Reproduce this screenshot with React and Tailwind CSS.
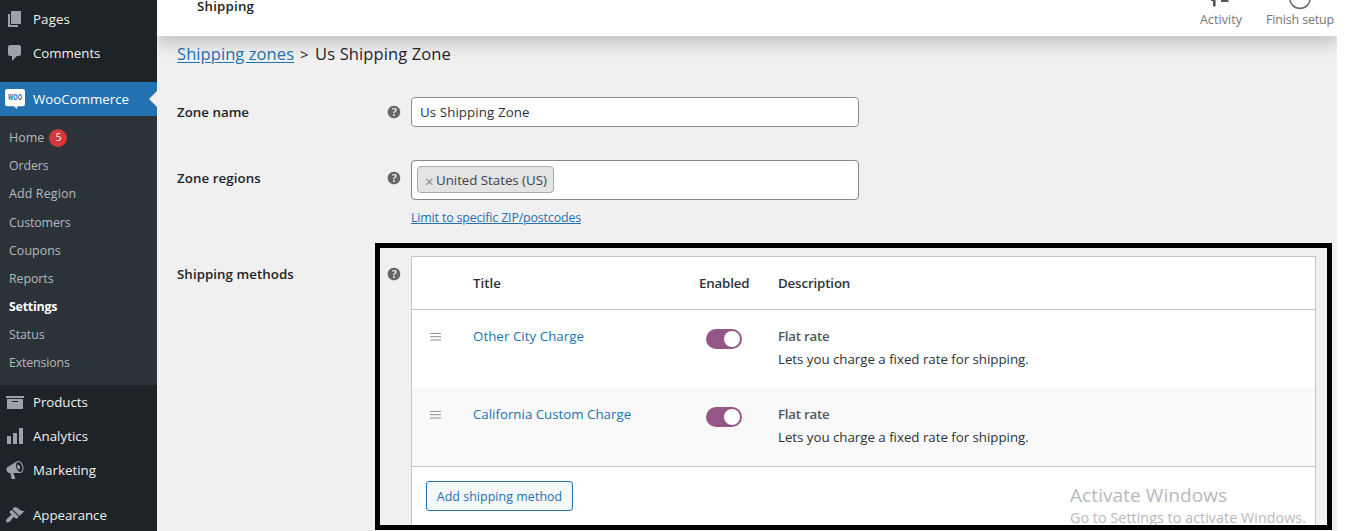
const ICONS = {
  page: "M6 15V2h10v13H6zm-1 1h8v2H3V5h2v11z",
  comments: "M5 2h9c1.1 0 2 .9 2 2v7c0 1.1-.9 2-2 2h-2l-5 5v-5H5c-1.1 0-2-.9-2-2V4c0-1.1.9-2 2-2z",
  archive: "M19 4v2H1V4h18zM2 7h16v10H2V7zm11 3V9H7v1h6z",
  chart: "M18 18V2h-4v16h4zm-6 0V7H8v11h4zm-6 0v-8H2v8h4z",
  megaphone:
    "M18.15 5.94c.46 1.62.38 3.22-.02 4.48-.42 1.28-1.26 2.18-2.3 2.48-.16.06-.26.06-.4.06-.06.02-.12.02-.18.02-.06.02-.14.02-.22.02h-6.8l2.22 5.5c.02.14-.06.26-.14.34-.08.1-.24.16-.34.16H6.95c-.1 0-.26-.06-.34-.16-.08-.08-.16-.2-.14-.34l-1-5.5H4.25l-.02-.02c-.5.06-1.08-.18-1.54-.62s-.88-1.08-1.06-1.88c-.24-.8-.2-1.56-.02-2.2.18-.62.58-1.08 1.06-1.3l.02-.02 9-5.4c.1-.06.18-.1.24-.16.06-.04.14-.08.24-.12.16-.08.28-.12.5-.18 1.04-.3 2.24.1 3.22.98s1.84 2.24 2.26 3.86zm-2.58 5.98h-.02c.4-.1.74-.34 1.04-.7.58-.7.86-1.76.86-3.04 0-.64-.1-1.3-.28-1.98-.34-1.36-1.02-2.5-1.78-3.24s-1.68-1.1-2.46-.88c-.82.22-1.4.96-1.7 2-.32 1.04-.28 2.36.06 3.72.38 1.36 1 2.5 1.8 3.24.78.74 1.62 1.1 2.48.88zm-2.54-7.08c.22-.04.42-.02.62.04.38.16.76.48 1.02 1s.42 1.2.42 1.78c0 .3-.04.56-.12.8-.18.48-.44.84-.86.94-.34.1-.8-.06-1.14-.4s-.64-.86-.78-1.5c-.18-.62-.12-1.24.02-1.72s.48-.84.82-.94z",
  appearance:
    "M14.48 11.06L7.41 3.99l1.5-1.5c.5-.56 2.3-.47 3.51.32 1.21.8 1.43 1.28 2.91 2.1 1.18.64 2.45 1.26 4.45.85zm-.71.71L6.7 4.7 4.93 6.47c-.39.39-.39 1.02 0 1.41l1.06 1.06c.39.39.39 1.03 0 1.42-.6.6-1.43 1.11-2.21 1.69-.35.26-.7.53-1.01.84C1.43 14.23.4 16.08 1.4 17.07c.99 1 2.84-.03 4.18-1.36.31-.31.58-.66.85-1.02.57-.78 1.08-1.61 1.69-2.21.39-.39 1.02-.39 1.41 0l1.06 1.06c.39.39 1.02.39 1.41 0z",
  help: "M17 10c0-3.87-3.14-7-7-7-3.87 0-7 3.13-7 7s3.13 7 7 7c3.86 0 7-3.13 7-7zm-6.3 1.48H9.14v-.43c0-.38.08-.7.24-.98s.46-.57.88-.89c.41-.29.68-.53.81-.71.14-.18.2-.39.2-.62 0-.25-.09-.44-.28-.58-.19-.13-.45-.19-.79-.19-.58 0-1.25.15-2 .46l-.64-1.28c.87-.49 1.8-.74 2.77-.74.81 0 1.45.2 1.92.58.48.39.71.91.71 1.55 0 .43-.09.8-.29 1.11-.19.32-.57.67-1.11 1.06-.38.28-.61.49-.71.63-.1.15-.15.34-.15.57v.35zm-1.47 2.74c-.18-.17-.27-.42-.27-.73 0-.33.08-.58.26-.75s.43-.25.77-.25c.32 0 .57.09.75.26s.27.42.27.74c0 .3-.09.55-.27.72-.18.18-.43.27-.75.27-.33 0-.58-.09-.76-.26z",
};

function Icon({ name, className }) {
  return (
    <svg viewBox="0 0 20 20" fill="currentColor" className={className}>
      <path d={ICONS[name]} />
    </svg>
  );
}

function WooIcon() {
  return (
    <svg viewBox="0 0 20 20" className="size-5 shrink-0 overflow-visible">
      <path d="M2.2 0h15.6Q20 0 20 2.2v12.8q0 2.2-2.2 2.2H12.4L12 20L9 17.2H2.2Q0 17.2 0 15V2.2Q0 0 2.2 0z" fill="#fff" />
      <text x="10" y="11.3" textAnchor="middle" textLength="14" lengthAdjust="spacingAndGlyphs" fontSize="8" fontWeight="700" fill="#2271b1" fontFamily="Open Sans, sans-serif">
        WOO
      </text>
    </svg>
  );
}

function MenuItem({ icon, label, tracking }) {
  return (
    <a className="flex h-[34px] shrink-0 items-center gap-2 pl-[5px] text-[13.3px] text-[#f0f0f1]">
      <Icon name={icon} className="size-5 shrink-0 text-[#9ca2a7]" />
      <span className={`pt-0.5 ${tracking}`}>{label}</span>
    </a>
  );
}

const SUBMENU = [
  { label: "Home", cls: "tracking-[0.1px]", badge: "5" },
  { label: "Orders", cls: "tracking-[-0.1px]" },
  { label: "Add Region", cls: "tracking-[0.16px]" },
  { label: "Customers", cls: "tracking-[-0.12px]" },
  { label: "Coupons", cls: "tracking-[0.06px]" },
  { label: "Reports", cls: "tracking-[-0.08px]" },
  { label: "Settings", cls: "font-bold text-white tracking-[-0.22px]" },
  { label: "Status", cls: "tracking-[-0.08px]" },
  { label: "Extensions", cls: "tracking-[-0.16px]" },
];

function Sidebar() {
  return (
    <nav className="flex h-full w-[157px] shrink-0 flex-col overflow-hidden bg-[#1d2327] pt-0.5">
      <MenuItem icon="page" label="Pages" tracking="tracking-[0.12px]" />
      <MenuItem icon="comments" label="Comments" tracking="tracking-[-0.04px]" />
      <a className="relative mt-3 flex h-[34px] shrink-0 items-center gap-2 bg-[#2271b1] pl-[5px] text-[13.3px] text-white">
        <WooIcon />
        <span className="pt-0.5">WooCommerce</span>
        <svg viewBox="0 0 8 16" className="absolute top-[9px] right-0 h-4 w-2">
          <path d="M8 0v16L0 8z" fill="#f0f0f1" />
        </svg>
      </a>
      <div className="flex h-[269px] shrink-0 flex-col bg-[#2c3338] pt-[7.4px]">
        {SUBMENU.map((s) => (
          <a key={s.label} className="flex h-[28.13px] shrink-0 items-center gap-[5px] pl-[9px] text-[12.4px] text-[#b5b9bc]">
            <span className={`pt-0.5 ${s.cls}`}>{s.label}</span>
            {s.badge && (
              <span className="mt-px flex size-[18px] items-center justify-center rounded-full bg-[#d63638] text-[10.5px] text-white">
                {s.badge}
              </span>
            )}
          </a>
        ))}
      </div>
      <MenuItem icon="archive" label="Products" tracking="tracking-[-0.05px]" />
      <MenuItem icon="chart" label="Analytics" tracking="tracking-[0.04px]" />
      <MenuItem icon="megaphone" label="Marketing" tracking="tracking-[0.04px]" />
      <div className="h-[11px] shrink-0" />
      <MenuItem icon="appearance" label="Appearance" tracking="tracking-[-0.05px]" />
    </nav>
  );
}

function Header() {
  return (
    <header className="relative z-10 flex h-9 w-[1180px] shrink-0 justify-between bg-white pl-10 shadow-[0_8px_16px_0_rgba(85,93,102,0.3)]">
      <h1 className="text-[13.3px] leading-[13px] font-semibold tracking-[0.2px] text-[#1e1e1e]">Shipping</h1>
      <div className="flex gap-6 pr-[3px] text-[12.4px] text-[#757575]">
        <div className="flex flex-col">
          <svg viewBox="0 0 42 12" className="h-3 w-[42px]" fill="#50575e">
            <path d="M13 0h2.6v6.6H13zM11 0h2v.9h-2zM21 0h7.5v2H21z" />
          </svg>
          <span className="leading-4 tracking-[0.1px]">Activity</span>
        </div>
        <div className="flex flex-col">
          <svg viewBox="0 0 67 12" className="h-3 w-[67px]" fill="none">
            <circle cx="34" cy="-1.8" r="10.2" stroke="#6c6f72" strokeWidth="1.6" />
          </svg>
          <span className="leading-4 tracking-[-0.12px]">Finish setup</span>
        </div>
      </div>
    </header>
  );
}

function FormRow({ label, tracking, labelHeight, className, children }) {
  return (
    <div className={`grid grid-cols-[207.6px_26.4px_1fr] items-start ${className}`}>
      <div className={`flex items-center pt-0.5 text-[13.3px] font-semibold text-[#1d2327] ${labelHeight} ${tracking}`}>{label}</div>
      <div className={`flex items-center ${labelHeight}`}>
        <Icon name="help" className="size-[18px] text-[#666]" />
      </div>
      <div>{children}</div>
    </div>
  );
}

function MethodRow({ title, tracking, className }) {
  return (
    <div className={`grid h-[78px] grid-cols-[61px_226px_79px_1fr] text-[13.3px] leading-[23px] ${className}`}>
      <div className="pt-[22px] pl-[18px]">
        <svg viewBox="0 0 11 9" className="h-[9px] w-[11px]" stroke="#8f8f8f">
          <path d="M0 1.4h11M0 4.7h11M0 8h11" />
        </svg>
      </div>
      <a className={`pt-[15px] text-[#2271b1] ${tracking}`}>{title}</a>
      <div className="pt-[19px] pl-[7px]">
        <div className="flex h-5 w-9 items-center justify-end rounded-full bg-[#935687] pr-0.5">
          <span className="size-4 rounded-full bg-white" />
        </div>
      </div>
      <div className="pt-[15px]">
        <div className="font-semibold tracking-[-0.25px] text-[#50575e]">Flat rate</div>
        <div className="tracking-[-0.02px] text-[#2c3338]">Lets you charge a fixed rate for shipping.</div>
      </div>
    </div>
  );
}

function MethodsTable() {
  return (
    <div className="h-[271px] w-[905px] overflow-hidden border border-b-0 border-[#c3c4c7] bg-white">
      <div className="grid h-[53px] grid-cols-[61px_226px_79px_1fr] items-center border-b border-[#c3c4c7] pt-0.5 text-[13.3px] font-semibold text-[#2c3338]">
        <span />
        <span className="tracking-[0.05px]">Title</span>
        <span className="tracking-[-0.15px]">Enabled</span>
        <span className="tracking-[-0.14px]">Description</span>
      </div>
      <MethodRow title="Other City Charge" tracking="tracking-[0.05px]" className="bg-white" />
      <MethodRow title="California Custom Charge" tracking="" className="bg-[#f9f9f9]" />
      <div className="border-t border-[#c3c4c7] pt-3.5 pl-3.5">
        <button className="h-[30px] w-[147px] rounded-[3px] border border-[#2271b1] bg-[#f6f7f7] pt-0.5 text-[12.4px] tracking-[0.07px] text-[#2271b1]">
          Add shipping method
        </button>
      </div>
    </div>
  );
}

export default function App() {
  return (
    <div className="relative flex h-[531px] w-[1360px] overflow-hidden bg-white font-['Open_Sans','Noto_Sans',sans-serif] whitespace-nowrap">
      <Sidebar />
      <div className="flex h-full w-[1180px] flex-col overflow-hidden bg-[#f0f0f1]">
        <Header />
        <main className="pl-5">
          <h2 className="flex h-9 items-center text-[16.5px] text-[#1d2327]">
            <a className="tracking-[0.08px] text-[#2271b1] underline underline-offset-2">Shipping zones</a>
            <span className="w-[21px] pl-[6px] text-[15px]">&gt;</span>
            <span className="tracking-[0.12px]">Us Shipping Zone</span>
          </h2>
          <FormRow label="Zone name" tracking="tracking-[0.02px]" labelHeight="h-[30px]" className="mt-[25px]">
            <div className="flex h-[30px] w-[448px] items-center rounded border border-[#8c8f94] bg-white pt-0.5 pl-2 text-[13.3px] tracking-[0.1px] text-[#2c3338]">
              Us Shipping Zone
            </div>
          </FormRow>
          <FormRow label="Zone regions" tracking="tracking-[0.09px]" labelHeight="h-9" className="mt-[33px]">
            <div className="flex h-10 w-[448px] items-start rounded border border-[#7e8993] bg-white pt-[5px] pl-[5px]">
              <span className="flex h-[27px] w-[137px] items-center rounded border border-[#aaa] bg-[#e4e4e4] pt-0.5 pl-[7px] text-[13.3px] text-[#3c434a]">
                <span className="w-[11px] text-[15px] leading-5 text-[#888]">×</span>
                <span className="tracking-[-0.02px]">United States (US)</span>
              </span>
            </div>
            <a className="mt-2 block h-5 text-[12.4px] leading-5 tracking-[-0.15px] text-[#2271b1] underline">
              Limit to specific ZIP/postcodes
            </a>
          </FormRow>
          <FormRow label="Shipping methods" tracking="tracking-[0.06px]" labelHeight="h-9" className="mt-7">
            <MethodsTable />
          </FormRow>
        </main>
      </div>
      <div className="absolute top-[484px] left-[1070px] text-[#b9b9b9]">
        <div className="text-[19px] leading-[22px] tracking-[0.08px]">Activate Windows</div>
        <div className="text-[14.3px] leading-[23px] tracking-[0.05px]">Go to Settings to activate Windows.</div>
      </div>
      <div className="absolute top-[243px] left-[375px] h-[287px] w-[957px] border-[5px] border-black" />
      <div className="absolute top-[530px] left-[375px] h-px w-[962px] bg-[#f0f0f1]" />
    </div>
  );
}
